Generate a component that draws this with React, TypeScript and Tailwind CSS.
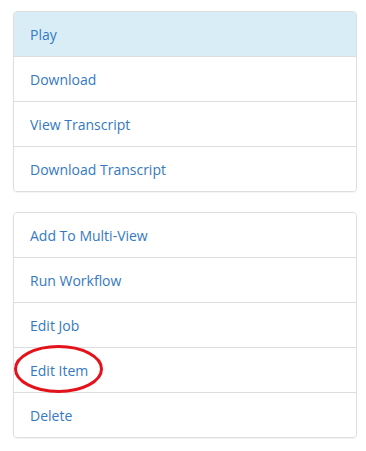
import React from "react";

const Row = ({ label, active }: { label: string; active?: boolean }) => (
  <div
    className={`box-content h-[44px] flex items-center pl-[16px] text-[14px] text-[#3579c0] ${
      active ? "bg-[#d9edf7]" : "bg-white"
    }`}
  >
    {label}
  </div>
);

export default function App() {
  return (
    <div
      className="w-[366px] h-[451px] bg-white pt-[11px] pl-[13px] relative"
      style={{ fontFamily: '"Open Sans", sans-serif' }}
    >
      <div className="w-[344px] border border-[#dddddd] rounded-[4px] overflow-hidden divide-y divide-[#dddddd] shadow-[0_1px_1px_rgba(0,0,0,0.05)]">
        <Row label="Play" active />
        <Row label="Download" />
        <Row label="View Transcript" />
        <Row label="Download Transcript" />
      </div>
      <div className="mt-[20px] w-[344px] border border-[#dddddd] rounded-[4px] overflow-hidden divide-y divide-[#dddddd] shadow-[0_1px_1px_rgba(0,0,0,0.05)]">
        <Row label="Add To Multi-View" />
        <Row label="Run Workflow" />
        <Row label="Edit Job" />
        <Row label="Edit Item" />
        <Row label="Delete" />
      </div>
      <svg className="absolute left-0 top-0 pointer-events-none" width="366" height="451">
        <ellipse cx="58.5" cy="369" rx="43" ry="22.5" fill="none" stroke="#e3121b" strokeWidth="3" />
      </svg>
    </div>
  );
}
